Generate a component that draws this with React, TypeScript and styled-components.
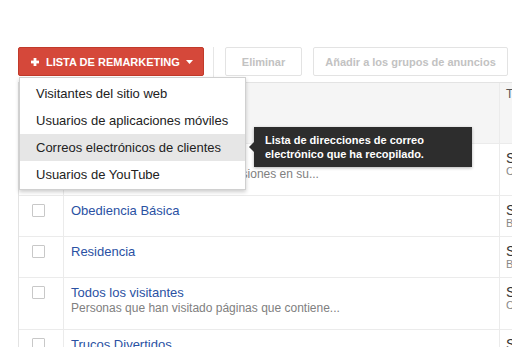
import React from "react";
import styled, { createGlobalStyle } from "styled-components";

const Global = createGlobalStyle`
  html, body { margin: 0; padding: 0; background: #fff; }
  body { font-family: "Liberation Sans", Arial, sans-serif; overflow: hidden; }
  * { box-sizing: border-box; }
`;

const Page = styled.div`
  position: relative;
  width: 512px;
  height: 347px;
  overflow: hidden;
  padding: 47px 0 0 18px;
`;

const Toolbar = styled.div`
  display: flex;
  align-items: center;
  height: 29px;
  width: 520px;
`;

const RedButton = styled.button`
  flex-shrink: 0;
  display: flex;
  align-items: center;
  width: 186px;
  height: 29px;
  padding: 0 0 0 12px;
  border: 1px solid #c13a2a;
  border-radius: 2px;
  background: #d5483a;
  color: #fff;
  font-family: inherit;
  font-size: 11px;
  font-weight: bold;
  letter-spacing: 0;
  cursor: pointer;
`;

const ButtonLabel = styled.span`
  margin: 0 6px 0 7px;
  white-space: nowrap;
`;

const Separator = styled.div`
  flex-shrink: 0;
  width: 1px;
  height: 30px;
  background: #e6e6e6;
  margin: 0 11px 0 9px;
`;

const GhostButton = styled.button<{ $w: number }>`
  flex-shrink: 0;
  width: ${(p) => p.$w}px;
  height: 29px;
  margin-right: 11px;
  border: 1px solid #e3e3e3;
  border-radius: 2px;
  background: #fff;
  color: #c2c2c2;
  font-family: inherit;
  font-size: 11px;
  font-weight: bold;
  white-space: nowrap;
  padding: 0;
`;

const Table = styled.div`
  margin-top: 6px;
  width: 600px;
  border-top: 1px solid #e3e3e3;
  border-left: 1px solid #e3e3e3;
`;

const Row = styled.div<{ $header?: boolean }>`
  display: grid;
  grid-template-columns: 45px 436px 1fr;
  min-height: ${(p) => (p.$header ? 61 : 41)}px;
  background: ${(p) => (p.$header ? "#f5f5f5" : "#fff")};
  border-bottom: 1px solid #ebebeb;
`;

const CheckCell = styled.div`
  border-right: 1px solid #ebebeb;
  padding: 8px 0 0 13px;
`;

const Checkbox = styled.span`
  display: block;
  width: 13px;
  height: 13px;
  border: 1px solid #c8c8c8;
  border-radius: 1px;
  background: #fff;
`;

const NameCell = styled.div`
  border-right: 1px solid #ebebeb;
  padding: 8px 0 13px 7px;
`;

const Title = styled.div`
  color: #2a51a3;
  font-size: 13px;
  line-height: 14px;
  white-space: nowrap;
`;

const Sub = styled.div`
  color: #808080;
  font-size: 12px;
  line-height: 16px;
  white-space: nowrap;
`;

const TypeCell = styled.div`
  padding: 7px 0 0 6px;
`;

const TypeMain = styled.div`
  color: #333;
  font-size: 14px;
  line-height: 14px;
  white-space: nowrap;
`;

const TypeSub = styled.div`
  color: #888;
  font-size: 11px;
  line-height: 13px;
  white-space: nowrap;
`;

const HeadText = styled.div`
  color: #555;
  font-size: 12px;
  padding: 4px 0 0 6px;
`;

const Menu = styled.div`
  position: absolute;
  left: 19px;
  top: 77px;
  width: 227px;
  padding: 2px 0 1px;
  background: #fff;
  border: 1px solid #d0d0d0;
  box-shadow: 0 2px 4px rgba(0, 0, 0, 0.2);
  z-index: 5;
`;

const MenuItem = styled.div<{ $active?: boolean }>`
  height: 27px;
  line-height: 27px;
  padding-left: 16px;
  font-size: 13px;
  color: #222;
  white-space: nowrap;
  background: ${(p) => (p.$active ? "#e6e6e6" : "transparent")};
`;

const Tooltip = styled.div`
  position: absolute;
  left: 254px;
  top: 127px;
  width: 218px;
  height: 40px;
  padding: 6px 0 0 11px;
  background: #2d2d2d;
  color: #fff;
  font-size: 11px;
  font-weight: bold;
  line-height: 14px;
  box-shadow: 0 1px 3px rgba(0, 0, 0, 0.3);
  z-index: 6;
  &::before {
    content: "";
    position: absolute;
    left: -5px;
    top: 15px;
    border-top: 5px solid transparent;
    border-bottom: 5px solid transparent;
    border-right: 5px solid #2d2d2d;
  }
`;

const rows = [
  { title: "Conversores", sub: "Visitantes que realizaron conversiones en su...", t: "Sitio web", ts: "Cerrada" },
  { title: "Obediencia Básica", t: "Sitio web", ts: "Básica" },
  { title: "Residencia", t: "Sitio web", ts: "Básica" },
  { title: "Todos los visitantes", sub: "Personas que han visitado páginas que contiene...", t: "Sitio web", ts: "Cerrada" },
  { title: "Trucos Divertidos", t: "Sitio web", ts: "Básica" },
];

const Plus = () => (
  <svg width="8" height="8" viewBox="0 0 8 8">
    <rect x="2.6" y="0" width="2.8" height="8" fill="#fff" />
    <rect x="0" y="2.6" width="8" height="2.8" fill="#fff" />
  </svg>
);

const Caret = () => (
  <svg width="7" height="4" viewBox="0 0 7 4">
    <path d="M0 0 L7 0 L3.5 4 Z" fill="#fff" />
  </svg>
);

export default function App() {
  return (
    <Page>
      <Global />
      <Toolbar>
        <RedButton>
          <Plus />
          <ButtonLabel>LISTA DE REMARKETING</ButtonLabel>
          <Caret />
        </RedButton>
        <Separator />
        <GhostButton $w={77}>Eliminar</GhostButton>
        <GhostButton $w={195}>Añadir a los grupos de anuncios</GhostButton>
      </Toolbar>
      <Table>
        <Row $header>
          <CheckCell />
          <NameCell />
          <HeadText>Tipo</HeadText>
        </Row>
        {rows.map((r) => (
          <Row key={r.title}>
            <CheckCell>
              <Checkbox />
            </CheckCell>
            <NameCell>
              <Title>{r.title}</Title>
              {r.sub && <Sub>{r.sub}</Sub>}
            </NameCell>
            <TypeCell>
              <TypeMain>{r.t}</TypeMain>
              <TypeSub>{r.ts}</TypeSub>
            </TypeCell>
          </Row>
        ))}
      </Table>
      <Menu>
        <MenuItem>Visitantes del sitio web</MenuItem>
        <MenuItem>Usuarios de aplicaciones móviles</MenuItem>
        <MenuItem $active>Correos electrónicos de clientes</MenuItem>
        <MenuItem>Usuarios de YouTube</MenuItem>
      </Menu>
      <Tooltip>
        Lista de direcciones de correo
        <br />
        electrónico que ha recopilado.
      </Tooltip>
    </Page>
  );
}
